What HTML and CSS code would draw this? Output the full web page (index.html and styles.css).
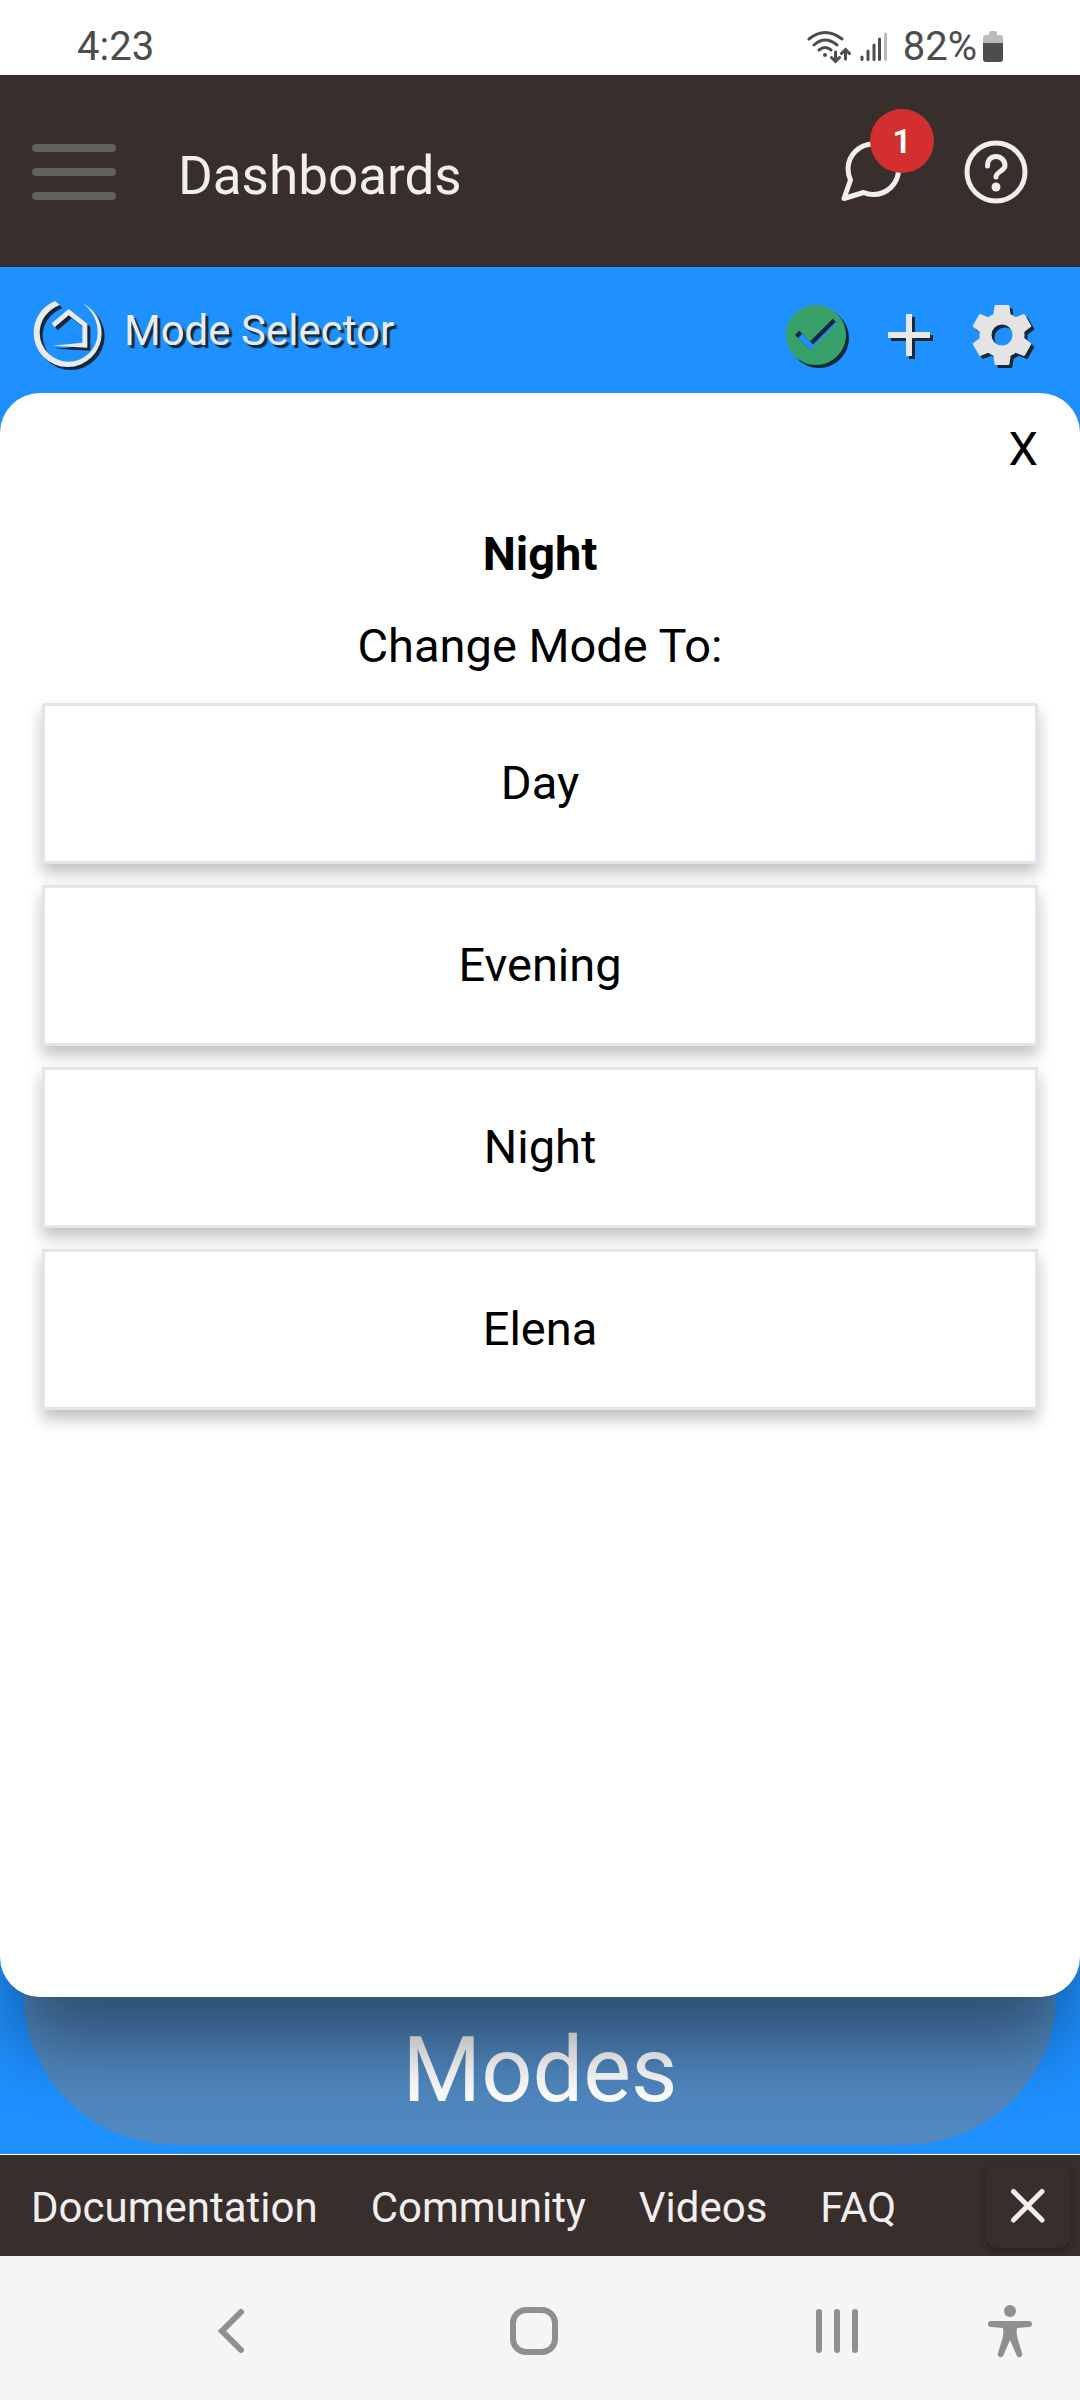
FILE: index.html
```html
<!DOCTYPE html>
<html lang="en">
<head>
    <meta charset="UTF-8">
    <meta name="viewport" content="width=device-width, initial-scale=1.0">
    <title>Dashboards</title>
    <link rel="stylesheet" href="styles.css">
</head>
<body>

    <div class="status-bar">
        <span>4:23</span>
        <div class="status-icons">
            <svg class="wifi" width="44" height="34" viewBox="0 0 44 34" fill="none" stroke="#4d4d4d" stroke-width="3" stroke-linecap="round">
                <path d="M2 9Q18 -4 35 9M7 15Q18 5 30 15M12 20Q18 15 24 20"/>
                <circle cx="18" cy="25" r="2" fill="#4d4d4d" stroke="none"/>
                <path d="M28.500 22V31M24.500 27.500L28.500 31.500L32.500 27.500M38.500 29V20M34.500 23.500L38.500 19.500L42.500 23.500"/>
            </svg>
            <svg class="signal" width="28" height="30" viewBox="0 0 28 30" fill="none" stroke="#4d4d4d" stroke-width="3" stroke-linecap="round">
                <path d="M2 25V27.500M8 19V27.500M14 13V27.500M19.500 7V27.500"/>
                <path d="M25.500 2V27.500" stroke="#bbb"/>
            </svg>
            <span>82%</span>
            <svg class="battery" width="20" height="32" viewBox="0 0 20 32">
                <path d="M6 2Q6 0 8 0H12Q14 0 14 2V4H17Q20 4 20 7V12H0V7Q0 4 3 4H6Z" fill="#bbb"/>
                <path d="M0 12H20V28Q20 31 17 31H3Q0 31 0 28Z" fill="#4d4d4d"/>
            </svg>
        </div>
    </div>

    <header class="app-header">
        <button class="menu-button" aria-label="Menu">
            <span></span>
            <span></span>
            <span></span>
        </button>
        <h1>Dashboards</h1>
        <button class="icon-button chat-button" aria-label="Messages">
            <svg width="66" height="66" viewBox="0 0 66 66" fill="none" stroke="#f0eeee" stroke-width="5" stroke-linejoin="round">
                <path d="M10.500 41C8.500 37 8 33 8 29.500A25.300 25.300 0 1 1 33 55.500C29 55.500 26 54.500 23.500 53.500L4 59.500Z"/>
            </svg>
            <span class="badge">1</span>
        </button>
        <button class="icon-button" aria-label="Help">
            <svg width="72" height="72" viewBox="0 0 72 72" fill="none" stroke="#f0eeee" stroke-width="5" stroke-linecap="round" stroke-linejoin="round">
                <circle cx="36" cy="36" r="29"/>
                <path d="M27.500 30C27.500 24 31 20.500 36 20.500C41 20.500 45 24.500 45 29.500C45 35 36 35.500 36 41"/>
                <circle cx="36" cy="51" r="4.500" fill="#f0eeee" stroke="none"/>
            </svg>
        </button>
    </header>

    <main class="dashboard">
        <div class="toolbar">
            <svg class="logo" width="69" height="69" viewBox="0 0 207 207" fill="#e6ebf0">
                <path d="M66 6A102 102 0 0 0 2 102A102 102 0 0 0 104 204A102 102 0 0 0 206 102Q204 42 147 12Q194 46 194 102A87 87 0 0 1 107 188A87 87 0 0 1 20 102C20 62 45 32 80 18Z"/>
                <path d="M56 73L107 30L163 74V146L59 140L148 131V81L107 49L65 85Z"/>
            </svg>
            <h2>Mode Selector</h2>
            <button class="icon-button" aria-label="Status">
                <svg width="72" height="72" viewBox="0 0 24 24" fill="#38a169">
                    <path d="M12 2C6.500 2 2 6.500 2 12S6.500 22 12 22 22 17.500 22 12 17.500 2 12 2M10 17L5 12L6.410 10.590L10 14.170L17.590 6.580L19 8L10 17Z"/>
                </svg>
            </button>
            <button class="icon-button" aria-label="Add tile">
                <svg width="72" height="72" viewBox="0 0 24 24" fill="#e8e8e8">
                    <path d="M19 13H13V19H11V13H5V11H11V5H13V11H19V13Z"/>
                </svg>
            </button>
            <button class="icon-button" aria-label="Settings">
                <svg width="72" height="72" viewBox="0 0 24 24" fill="#e4e4e4">
                    <path d="M12,15.5A3.5,3.5 0 0,1 8.5,12A3.5,3.5 0 0,1 12,8.5A3.5,3.5 0 0,1 15.5,12A3.5,3.5 0 0,1 12,15.5M19.43,12.97C19.47,12.65 19.5,12.33 19.5,12C19.5,11.67 19.47,11.34 19.43,11L21.54,9.37C21.73,9.22 21.78,8.95 21.66,8.73L19.66,5.27C19.54,5.05 19.27,4.96 19.05,5.05L16.56,6.05C16.04,5.66 15.5,5.32 14.87,5.07L14.5,2.42C14.46,2.18 14.25,2 14,2H10C9.75,2 9.54,2.18 9.5,2.42L9.13,5.07C8.5,5.32 7.96,5.66 7.44,6.05L4.95,5.05C4.73,4.96 4.46,5.05 4.34,5.27L2.34,8.73C2.21,8.95 2.27,9.22 2.46,9.37L4.57,11C4.53,11.34 4.5,11.67 4.5,12C4.5,12.33 4.53,12.65 4.57,12.97L2.46,14.63C2.27,14.78 2.21,15.05 2.34,15.27L4.34,18.73C4.46,18.95 4.73,19.03 4.95,18.95L7.44,17.94C7.96,18.34 8.5,18.68 9.13,18.93L9.5,21.58C9.54,21.82 9.75,22 10,22H14C14.25,22 14.46,21.82 14.5,21.58L14.87,18.93C15.5,18.67 16.04,18.34 16.56,17.94L19.05,18.95C19.27,19.03 19.54,18.95 19.66,18.73L21.66,15.27C21.78,15.05 21.73,14.78 21.54,14.63L19.43,12.97Z"/>
                </svg>
            </button>
        </div>

        <div class="board">
            <div class="tile">Modes</div>

            <!-- Mode picker, opened over the tile -->
            <div class="modal" role="dialog" aria-labelledby="currentMode">
                <button class="modal-close">X</button>
                <h3 id="currentMode">Night</h3>
                <p>Change Mode To:</p>
                <div class="mode-list">
                    <button>Day</button>
                    <button>Evening</button>
                    <button>Night</button>
                    <button>Elena</button>
                </div>
            </div>
        </div>
    </main>

    <footer class="app-footer">
        <nav>
            <a href="#">Documentation</a>
            <a href="#">Community</a>
            <a href="#">Videos</a>
            <a href="#">FAQ</a>
        </nav>
        <button class="footer-close" aria-label="Close">
            <svg width="36" height="36" viewBox="0 0 36 36" stroke="#f0eeee" stroke-width="5" stroke-linecap="round">
                <path d="M3.500 3.500L32 32M32 3.500L3.500 32"/>
            </svg>
        </button>
    </footer>

    <div class="system-nav">
        <div class="system-buttons">
            <button class="icon-button" aria-label="Back">
                <svg width="48" height="52" viewBox="0 0 48 52" fill="none" stroke="#8f8f8f" stroke-width="6" stroke-linecap="round">
                    <path d="M34 7L15 26L34 45"/>
                </svg>
            </button>
            <button class="icon-button" aria-label="Home">
                <svg width="48" height="52" viewBox="0 0 48 52" fill="none" stroke="#8f8f8f" stroke-width="6">
                    <rect x="3" y="5" width="42" height="42" rx="13"/>
                </svg>
            </button>
            <button class="icon-button" aria-label="Recent apps">
                <svg width="48" height="52" viewBox="0 0 48 52" fill="none" stroke="#8f8f8f" stroke-width="6" stroke-linecap="round">
                    <path d="M6 7V45M24 7V45M42 7V45"/>
                </svg>
            </button>
        </div>
        <button class="icon-button" aria-label="Accessibility">
            <svg width="48" height="52" viewBox="0 0 48 52" fill="#8f8f8f">
                <circle cx="24" cy="6" r="6"/>
                <path d="M5 16H43Q46 16 46 19T43 22L31 23Q30 29 32 35L36 48Q37 51 34.500 52Q31.500 53 30.500 50L24 35L17.500 50Q16.500 53 13.500 52Q11 51 12 48L16 35Q18 29 17 23L5 22Q2 22 2 19T5 16Z"/>
            </svg>
        </button>
    </div>

</body>
</html>
```

FILE: styles.css
```css
* {
    box-sizing: border-box;
}

body {
    display: flex;
    flex-direction: column;
    min-height: 100vh;
    margin: 0;
    font-family: Roboto, "Liberation Sans", sans-serif;
    font-size: 42px;
    background-color: #f5f5f5;
}

h1, h2, h3, p {
    margin: 0;
    font-weight: 400;
}

button {
    padding: 0;
    border: none;
    background: none;
    font-family: inherit;
    color: inherit;
    cursor: pointer;
}

svg {
    display: block;
}

.icon-button {
    flex: none;
}

/* Phone status bar */
.status-bar {
    display: flex;
    align-items: flex-start;
    justify-content: space-between;
    height: 75px;
    padding: 23px 77px 0;
    font-size: 40px;
    line-height: 48px;
    color: #4d4d4d;
    background-color: #fff;
}

.status-icons {
    display: flex;
    align-items: center;
}

.signal {
    margin: 0 15px 0 9px;
}

.battery {
    margin-left: 6px;
}

/* Header */
.app-header {
    display: flex;
    align-items: center;
    height: 192px;
    padding: 1px 48px 0 32px;
    color: #f0eeee;
    background-color: #382e2c;
}

.menu-button {
    display: grid;
    gap: 16px;
    width: 84px;
}

.menu-button span {
    height: 8px;
    border-radius: 4px;
    background-color: #636160;
}

.app-header h1 {
    flex: 1;
    margin-left: 62px;
    font-size: 53px;
    line-height: 60px;
    padding-top: 8px;
}

.chat-button {
    position: relative;
    margin-right: 54px;
}

.badge {
    position: absolute;
    top: -30px;
    left: 30px;
    width: 64px;
    height: 64px;
    border-radius: 50%;
    font-size: 34px;
    font-weight: 600;
    line-height: 64px;
    color: #fff;
    background-color: #d32f2f;
}

/* Dashboard */
.dashboard {
    display: flex;
    flex: 1;
    flex-direction: column;
    border-bottom: 1px solid #fff;
    background-color: #1e90ff;
    overflow: hidden;
}

.toolbar {
    display: flex;
    align-items: center;
    gap: 21px;
    height: 126px;
    padding: 10px 42px 0 33px;
}

.toolbar svg {
    filter: drop-shadow(3px 3px 0 #16283a);
}

.toolbar .logo {
    margin-bottom: 4px;
}

.toolbar h2 {
    flex: 1;
    font-size: 42px;
    line-height: 48px;
    padding: 0 0 8px 1px;
    color: #e8ecf0;
    text-shadow: 3px 3px 1px #16283a;
}

.board {
    position: relative;
    display: flex;
    flex: 1;
    padding: 0 24px 9px;
}

.tile {
    display: flex;
    flex: 1;
    align-items: flex-end;
    justify-content: center;
    padding-bottom: 20px;
    border-radius: 150px;
    font-size: 90px;
    line-height: 108px;
    color: #fff;
    background-color: #5088c0;
}

/* Mode picker */
.modal {
    position: absolute;
    inset: 0 0 157px;
    display: flex;
    flex-direction: column;
    padding: 28px 42px;
    border-radius: 40px;
    font-size: 47px;
    line-height: 56px;
    text-align: center;
    color: #000;
    background-color: #fff;
    box-shadow: 0 60px 75px -15px rgba(0, 0, 0, 0.43);
}

.modal-close {
    align-self: flex-end;
    font-size: 47px;
    line-height: 56px;
}

.modal h3 {
    margin: 49px 0 36px;
    font-size: 47px;
    font-weight: 700;
}

.mode-list {
    display: grid;
    gap: 21px;
    margin-top: 29px;
}

.mode-list button {
    height: 161px;
    padding-bottom: 2px;
    border: 3px solid #e2e6ec;
    font-size: 47px;
    background-color: #fff;
    box-shadow: 0 9px 15px rgba(0, 0, 0, 0.25);
}

/* Footer */
.app-footer {
    display: flex;
    align-items: center;
    justify-content: space-between;
    height: 101px;
    padding: 0 10px 0 31px;
    background-color: #382e2c;
}

.app-footer nav {
    display: flex;
    gap: 53px;
    padding-top: 4px;
}

.app-footer a {
    line-height: 48px;
    color: #f0eeee;
    text-decoration: none;
}

.footer-close {
    display: grid;
    place-items: center;
    width: 84px;
    height: 85px;
    border-radius: 12px;
    background-color: #382e2c;
    box-shadow: 0 3px 6px rgba(0, 0, 0, 0.35);
}

/* Phone navigation */
.system-nav {
    display: flex;
    align-items: center;
    height: 144px;
    padding: 6px 46px 0 207px;
    background-color: #f5f5f5;
}

.system-nav svg {
    overflow: visible;
}

.system-buttons {
    display: flex;
    flex: 1;
    justify-content: space-between;
    margin-right: 125px;
}
```
